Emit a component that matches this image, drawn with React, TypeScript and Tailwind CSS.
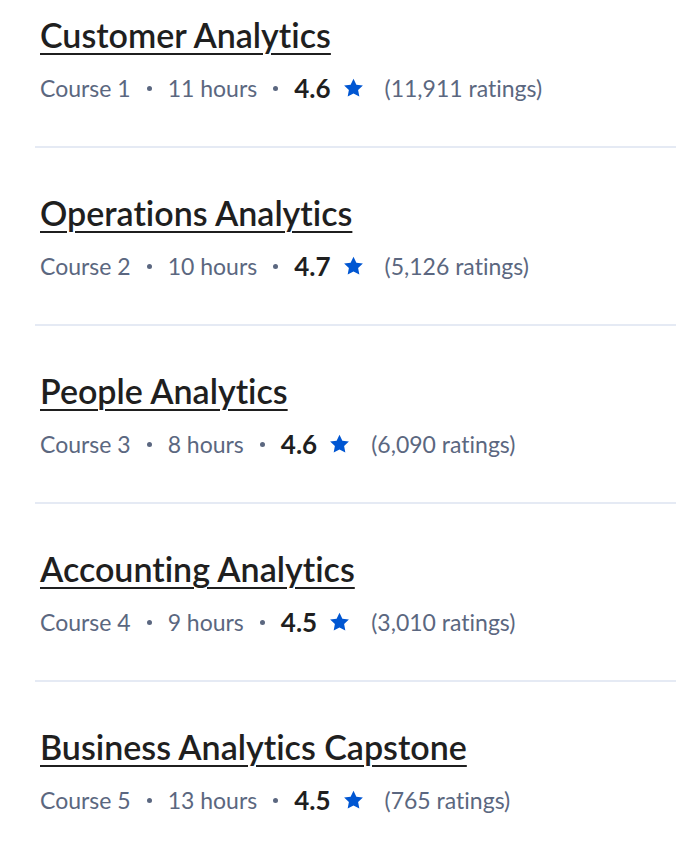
const courses = [
  { title: 'Customer Analytics', num: 1, hours: 11, rating: '4.6', count: '11,911' },
  { title: 'Operations Analytics', num: 2, hours: 10, rating: '4.7', count: '5,126' },
  { title: 'People Analytics', num: 3, hours: 8, rating: '4.6', count: '6,090' },
  { title: 'Accounting Analytics', num: 4, hours: 9, rating: '4.5', count: '3,010' },
  { title: 'Business Analytics Capstone', num: 5, hours: 13, rating: '4.5', count: '765' },
];

const Star = () => (
  <svg width="21" height="20" viewBox="0 0 24 23" className="ml-[12px] mr-[21px]">
    <path
      d="M12 0.8l3.3 6.9 7.5 1-5.5 5.2 1.4 7.5L12 17.8l-6.7 3.6 1.4-7.5L1.2 8.7l7.5-1z"
      fill="#0056d2"
    />
  </svg>
);

const Dot = () => <span className="mx-[16px] h-[5px] w-[5px] rounded-full bg-[#5b6780]" />;

const App = () => {
  return (
    <div className="min-h-screen bg-white pl-[35px] font-['Lato','Liberation_Sans',sans-serif] [font-variant-ligatures:none]">
      {courses.map((course, i) => (
        <div
          key={course.num}
          className={`pl-[5px] ${i === 0 ? 'pt-[15px]' : 'pt-[45px]'} pb-[44px] ${
            i < courses.length - 1 ? 'border-b-2 border-[#e5eaf4]' : ''
          }`}
        >
          <a
            href="#"
            className="text-[34px] leading-[40px] font-semibold text-[#1f1f1f] underline underline-offset-[5px] decoration-[2px]"
          >
            {course.title}
          </a>
          <div className="mt-[19px] flex items-center text-[23px] leading-[28px] text-[#5b6780]">
            <span>Course {course.num}</span>
            <Dot />
            <span>{course.hours} hours</span>
            <Dot />
            <span className="text-[26px] font-bold text-[#1f1f1f]">{course.rating}</span>
            <Star />
            <span>({course.count} ratings)</span>
          </div>
        </div>
      ))}
    </div>
  );
};

export default App;
